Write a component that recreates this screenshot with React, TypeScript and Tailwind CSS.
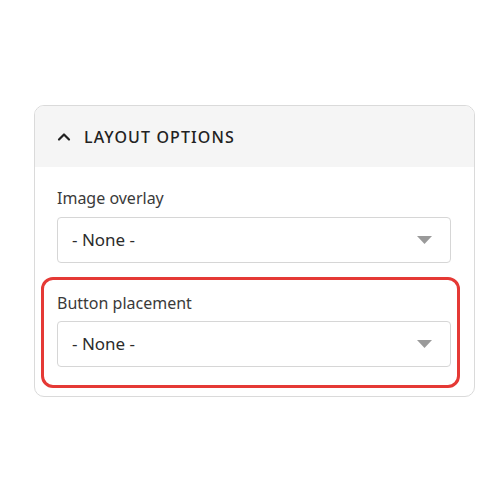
import { ChevronUp } from "lucide-react";

function SelectBox({ value }: { value: string }) {
  return (
    <div className="flex h-[46px] items-center justify-between rounded-[4px] border border-[#d6d6d6] bg-white pl-[14px] pr-[18px]">
      <span className="text-[17px] text-[#2b2b2b]">{value}</span>
      <svg width="15" height="8" viewBox="0 0 15 8" className="text-[#9a9a9a]">
        <path d="M0 0h15L7.5 8z" fill="currentColor" />
      </svg>
    </div>
  );
}

export default function App() {
  return (
    <div className="min-h-[500px] w-[500px] bg-white pt-[105px] pl-[34px]" style={{ fontFamily: '"Noto Sans", "Open Sans", sans-serif' }}>
      <div className="w-[441px] overflow-hidden rounded-[10px] border border-[#dadada] bg-white">
        {/* Header */}
        <div className="flex h-[61px] items-center gap-[10px] bg-[#f5f5f5] pl-[19px]">
          <ChevronUp size={20} strokeWidth={2.6} className="text-[#222]" />
          <span className="text-[16px] font-medium tracking-[0.07em] text-[#222]">LAYOUT OPTIONS</span>
        </div>

        {/* Body */}
        <div className="pt-[19px] pr-[23px] pb-[8px] pl-[22px]">
          <div className="text-[16px] leading-6 text-[#3a3a3a]">Image overlay</div>
          <div className="mt-[7px]">
            <SelectBox value="- None -" />
          </div>

          <div className="mt-[14px] -ml-[16px] -mr-[9px] rounded-[12px] border-[3px] border-[#e53935] pt-[11px] pr-[6px] pb-[18px] pl-[13px]">
            <div className="text-[16px] leading-6 text-[#3a3a3a]">Button placement</div>
            <div className="mt-[6px]">
              <SelectBox value="- None -" />
            </div>
          </div>
        </div>
      </div>
    </div>
  );
}
